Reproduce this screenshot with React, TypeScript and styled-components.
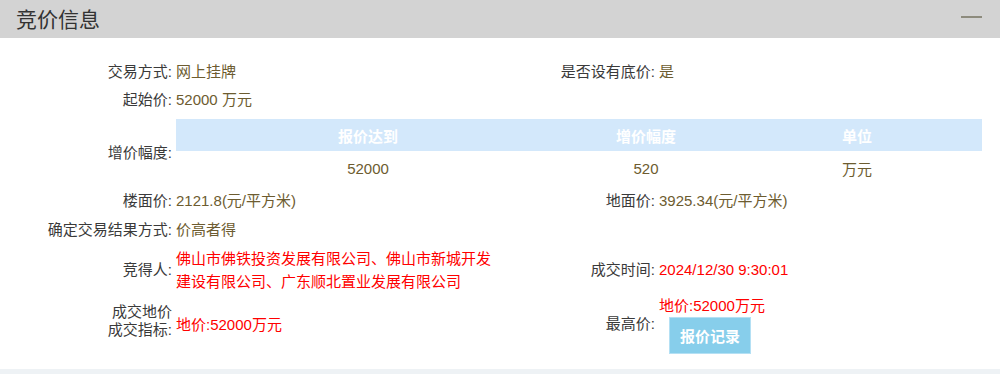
import styled, { createGlobalStyle } from "styled-components";

const GlobalStyle = createGlobalStyle`
  body {
    margin: 0;
    background: #ffffff;
    font-family: "Liberation Sans", "Noto Sans CJK SC", sans-serif;
  }
`;

const Panel = styled.section`
  width: 1000px;
  background: #ffffff;
`;

const Header = styled.div`
  height: 38px;
  background: #d3d3d3;
  display: flex;
  align-items: center;
  justify-content: space-between;
  padding: 0 18px 0 16px;
  box-sizing: border-box;
`;

const Title = styled.h2`
  margin: 0;
  font-size: 21px;
  font-weight: normal;
  color: #333333;
  line-height: 1;
`;

const Collapse = styled.span`
  display: block;
  width: 21px;
  height: 2px;
  background: #8d8b7d;
  margin-top: -4px;
`;

const Body = styled.div`
  padding: 20px 18px 15px 0;
`;

const Row = styled.div<{ $h: number }>`
  display: grid;
  grid-template-columns: 176px 320px 163px 1fr;
  min-height: ${({ $h }) => $h}px;
  align-items: center;
`;

const Label = styled.div<{ $pad?: string }>`
  text-align: right;
  padding: ${({ $pad }) => $pad || "0"};
  padding-right: 4px;
  font-size: 15px;
  line-height: 18px;
  color: #3a3a3a;
  align-self: stretch;
  display: flex;
  align-items: center;
  justify-content: flex-end;
`;

const Value = styled.div<{ $red?: boolean }>`
  font-size: 15px;
  line-height: ${({ $red }) => ($red ? "23px" : "18px")};
  color: ${({ $red }) => ($red ? "#ff0000" : "#6d5c30")};
`;

const Span3 = styled.div`
  grid-column: 2 / 5;
`;

const StepTable = styled.table`
  width: 100%;
  border-collapse: collapse;
  margin: 5px 0 1px;
  table-layout: fixed;
`;

const Th = styled.th<{ $w?: number }>`
  width: ${({ $w }) => ($w ? `${$w}px` : "auto")};
  height: 32px;
  padding: 0;
  background: #d3e8fb;
  color: #ffffff;
  font-size: 15px;
  font-weight: bold;
  text-align: center;
`;

const Td = styled.td`
  height: 34px;
  padding: 0;
  font-size: 15px;
  color: #6d5c30;
  text-align: center;
`;

const Stack = styled.div`
  display: flex;
  flex-direction: column;
  align-items: flex-start;
`;

const RecordButton = styled.button`
  margin-left: 10px;
  width: 82px;
  height: 37px;
  border: 1px solid #b4e0f4;
  background: #87ceeb;
  color: #ffffff;
  font-family: inherit;
  font-size: 15px;
  font-weight: bold;
  padding: 0;
  cursor: pointer;
`;

const BottomBar = styled.div`
  height: 5px;
  background: #eef2f5;
`;

export default function App() {
  return (
    <>
      <GlobalStyle />
      <Panel>
        <Header>
          <Title>竞价信息</Title>
          <Collapse />
        </Header>
        <Body>
          <Row $h={28}>
            <Label>交易方式:</Label>
            <Value>网上挂牌</Value>
            <Label>是否设有底价:</Label>
            <Value>是</Value>
          </Row>
          <Row $h={28}>
            <Label>起始价:</Label>
            <Value>52000 万元</Value>
          </Row>
          <Row $h={72}>
            <Label $pad="5px 0 0">增价幅度:</Label>
            <Span3>
              <StepTable>
                <thead>
                  <tr>
                    <Th $w={384}>报价达到</Th>
                    <Th $w={172}>增价幅度</Th>
                    <Th>单位</Th>
                  </tr>
                </thead>
                <tbody>
                  <tr>
                    <Td>52000</Td>
                    <Td>520</Td>
                    <Td>万元</Td>
                  </tr>
                </tbody>
              </StepTable>
            </Span3>
          </Row>
          <Row $h={29}>
            <Label>楼面价:</Label>
            <Value>2121.8(元/平方米)</Value>
            <Label>地面价:</Label>
            <Value>3925.34(元/平方米)</Value>
          </Row>
          <Row $h={30}>
            <Label>确定交易结果方式:</Label>
            <Value>价高者得</Value>
          </Row>
          <Row $h={49}>
            <Label>竞得人:</Label>
            <Value $red>
              佛山市佛铁投资发展有限公司、佛山市新城开发建设有限公司、广东顺北置业发展有限公司
            </Value>
            <Label>成交时间:</Label>
            <Value $red>2024/12/30 9:30:01</Value>
          </Row>
          <Row $h={60}>
            <Label $pad="0 0 6px">
              成交地价
              <br />
              成交指标:
            </Label>
            <Value $red>地价:52000万元</Value>
            <Label>最高价:</Label>
            <Stack>
              <Value $red>地价:52000万元</Value>
              <RecordButton>报价记录</RecordButton>
            </Stack>
          </Row>
        </Body>
        <BottomBar />
      </Panel>
    </>
  );
}
